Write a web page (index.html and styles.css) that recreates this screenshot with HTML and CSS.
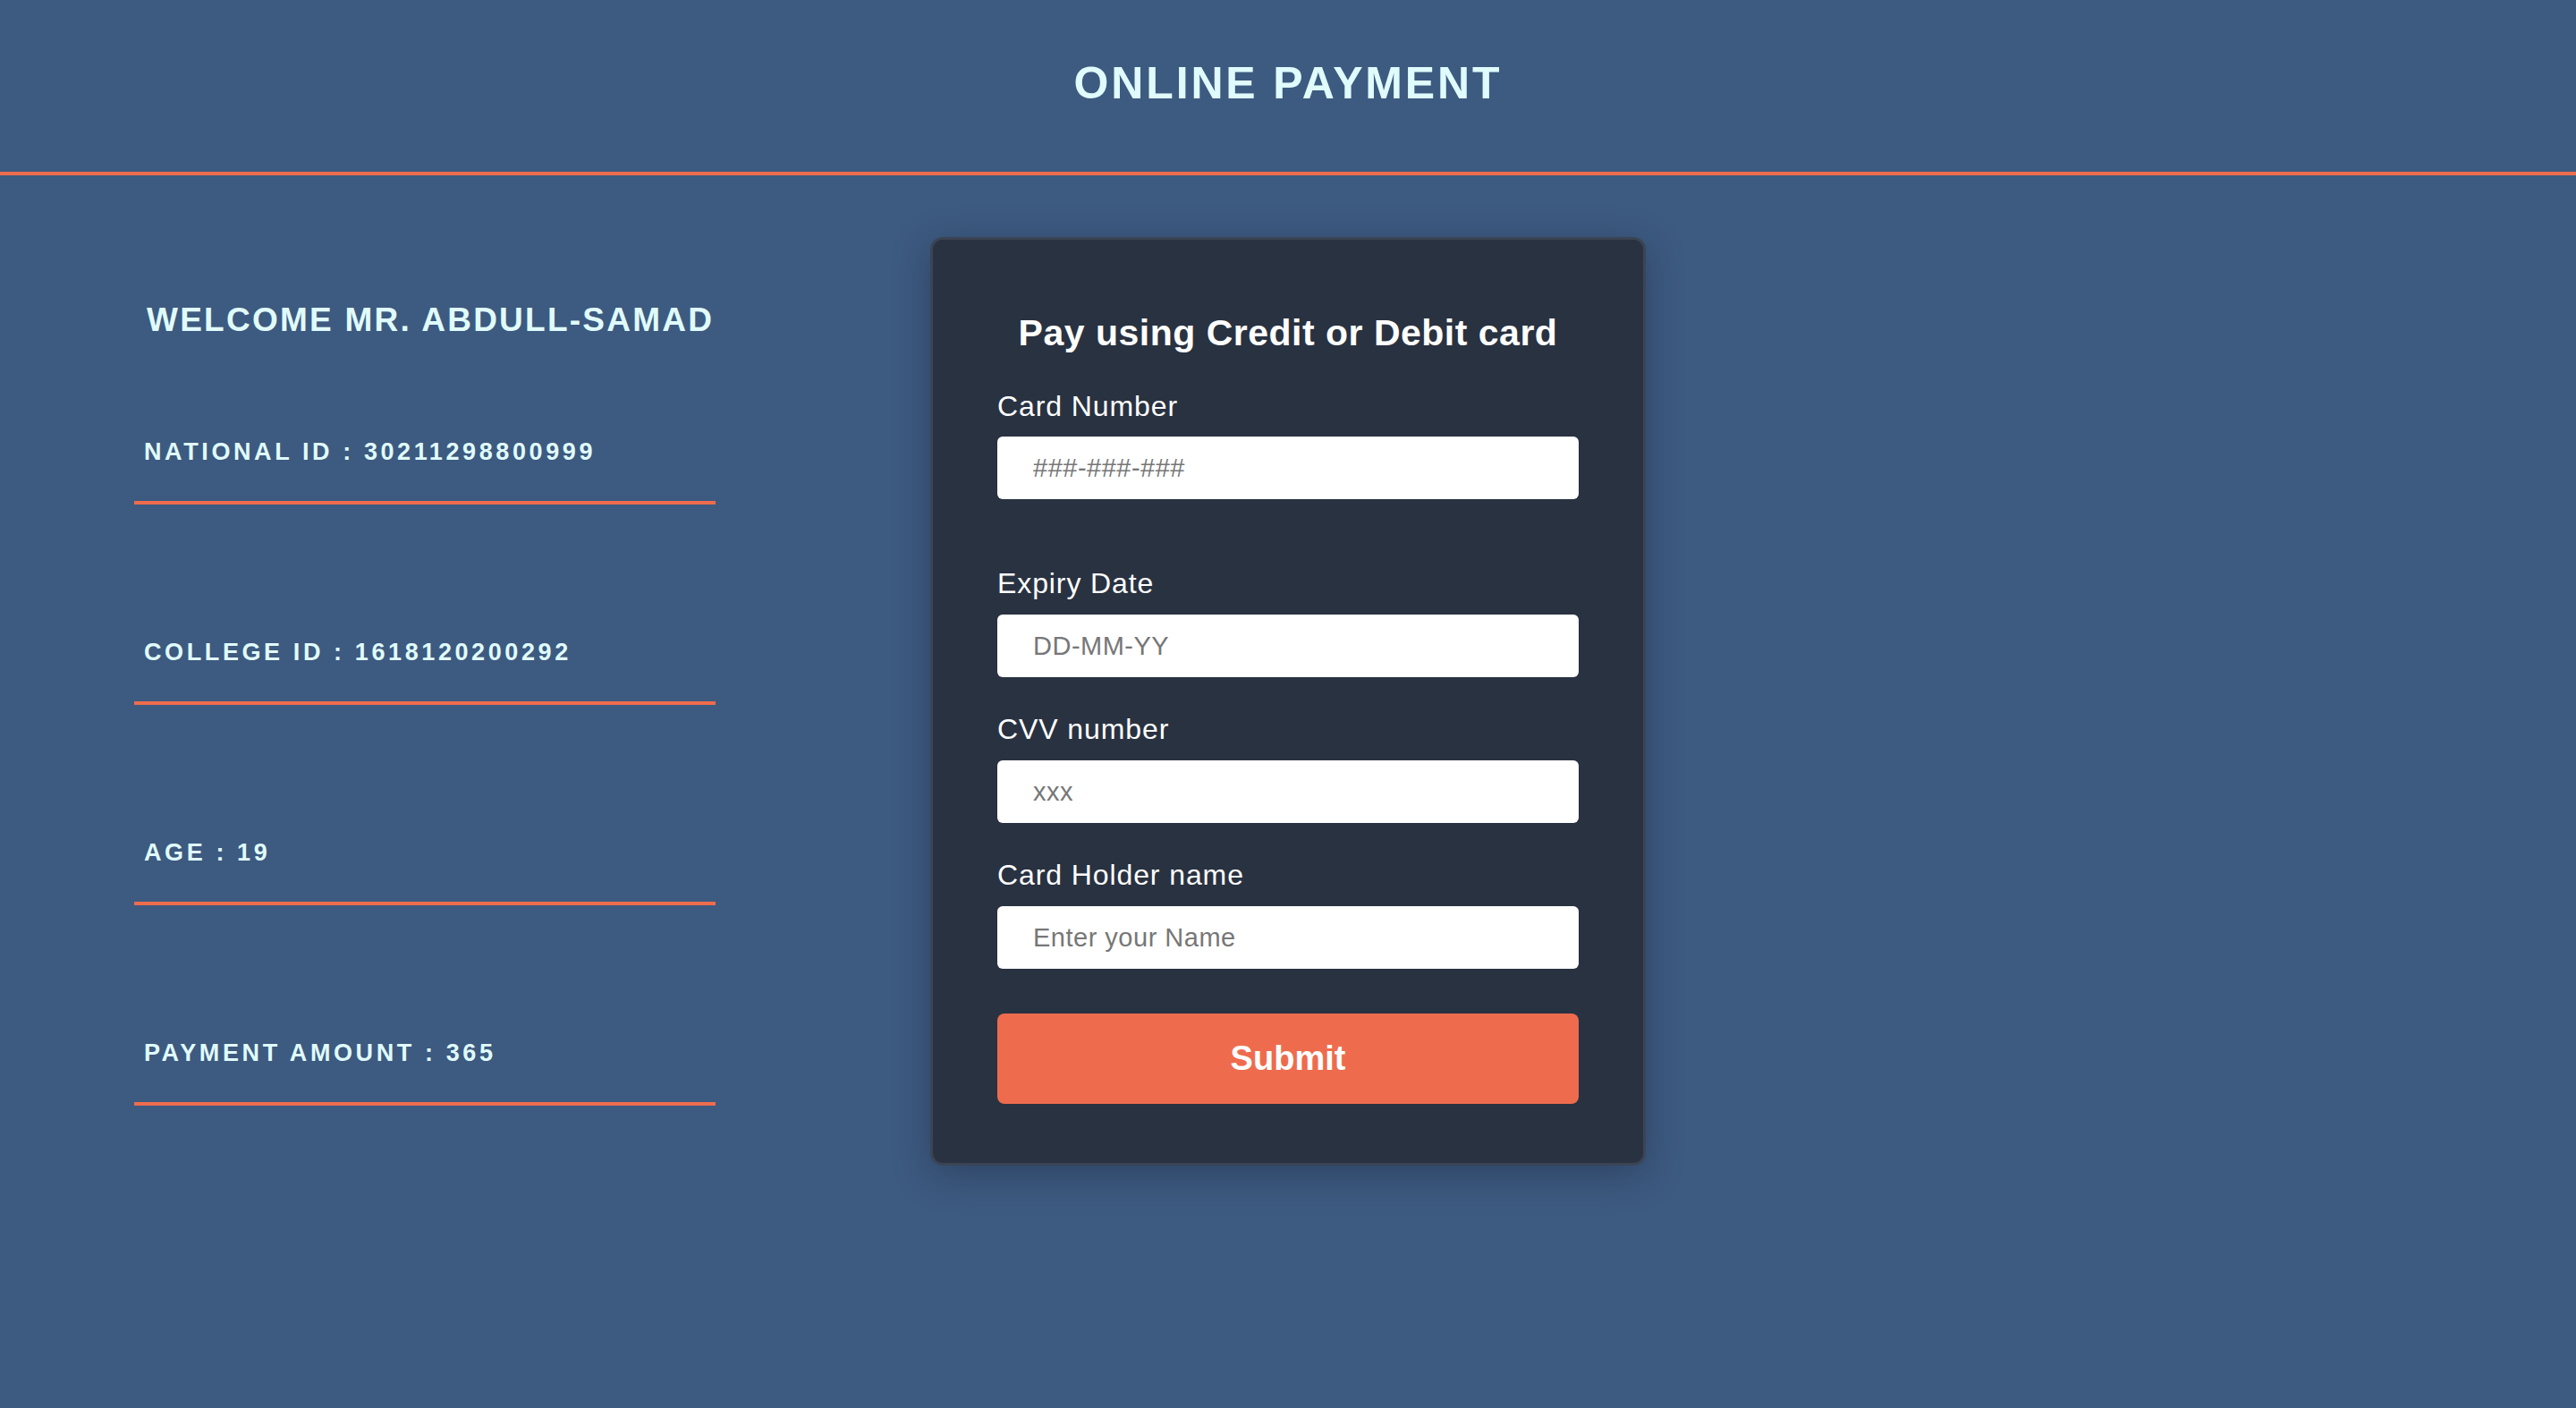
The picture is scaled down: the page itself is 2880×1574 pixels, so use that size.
FILE: index.html
```html
<!DOCTYPE html>
<html lang="en">
<head>
<meta charset="utf-8">
<title>Online Payment</title>
<link rel="stylesheet" href="styles.css">
</head>
<body>
<header class="topbar">
  <h1 class="topbar-title">ONLINE PAYMENT</h1>
</header>
<main class="layout">
  <section class="info">
    <h2 class="welcome">WELCOME MR. ABDULL-SAMAD</h2>
    <div class="info-row"><p class="info-text">NATIONAL ID : 30211298800999</p></div>
    <div class="info-row"><p class="info-text">COLLEGE ID : 1618120200292</p></div>
    <div class="info-row"><p class="info-text">AGE : 19</p></div>
    <div class="info-row"><p class="info-text">PAYMENT AMOUNT : 365</p></div>
  </section>
  <form class="card">
    <h3 class="card-title">Pay using Credit or Debit card</h3>
    <div class="field field-first">
      <label class="field-label">Card Number</label>
      <input class="field-input" type="text" placeholder="###-###-###">
    </div>
    <div class="field">
      <label class="field-label">Expiry Date</label>
      <input class="field-input" type="text" placeholder="DD-MM-YY">
    </div>
    <div class="field">
      <label class="field-label">CVV number</label>
      <input class="field-input" type="text" placeholder="xxx">
    </div>
    <div class="field field-last">
      <label class="field-label">Card Holder name</label>
      <input class="field-input" type="text" placeholder="Enter your Name">
    </div>
    <button class="submit" type="button">Submit</button>
  </form>
</main>
</body>
</html>
```
FILE: styles.css
```css
* { box-sizing: border-box; }
html, body {
  margin: 0;
  padding: 0;
}
body {
  background: #3d5a80;
  font-family: "Liberation Sans", Arial, Helvetica, sans-serif;
  color: #e0fbfc;
  min-height: 1574px;
}
.topbar {
  height: 196px;
  padding-top: 63px;
  border-bottom: 4px solid #ee6c4d;
}
.topbar-title {
  margin: 0;
  text-align: center;
  font-size: 50px;
  line-height: 60px;
  font-weight: 700;
  letter-spacing: 2.85px;
  color: #e0fbfc;
}
.layout {
  display: flex;
  align-items: flex-start;
  gap: 240px;
  padding-left: 150px;
}
.info {
  width: 650px;
  padding-top: 140px;
}
.welcome {
  margin: 0 0 107px 0;
  padding-left: 14px;
  font-size: 37px;
  line-height: 44px;
  font-weight: 700;
  letter-spacing: 2.25px;
  color: #e0fbfc;
}
.info-row {
  padding: 2px 0 39px 11px;
  border-bottom: 4px solid #ee6c4d;
  margin-bottom: 147px;
}
.info-text {
  margin: 0;
  font-size: 27px;
  line-height: 32px;
  font-weight: 700;
  letter-spacing: 3.6px;
  color: #e0fbfc;
}
.card {
  margin-top: 69px;
  width: 800px;
  background: #293241;
  border: 3px solid #3b4454;
  border-radius: 14px;
  padding: 80px 72px 66px 72px;
  box-shadow: 0 10px 40px rgba(20, 30, 50, 0.35);
  display: flex;
  flex-direction: column;
}
.card-title {
  margin: 0 0 40px 0;
  text-align: center;
  font-size: 41px;
  line-height: 48px;
  font-weight: 700;
  letter-spacing: 0.5px;
  color: #ffffff;
}
.field {
  display: flex;
  flex-direction: column;
  margin-bottom: 40px;
}
.field-first { margin-bottom: 76px; }
.field-last { margin-bottom: 50px; }
.field-first .field-label { margin-bottom: 15px; }
.field-label {
  font-size: 32px;
  line-height: 37px;
  letter-spacing: 0.9px;
  color: #ffffff;
  margin-bottom: 16px;
}
.field-input {
  height: 70px;
  width: 100%;
  border: none;
  border-radius: 6px;
  background: #ffffff;
  padding: 0 40px;
  font-family: "Liberation Sans", Arial, Helvetica, sans-serif;
  font-size: 29px;
  letter-spacing: 0.5px;
  color: #222;
  outline: none;
}
.field-input::placeholder {
  color: #777777;
}
.submit {
  height: 101px;
  width: 100%;
  border: none;
  border-radius: 8px;
  background: #ee6c4d;
  color: #ffffff;
  font-family: "Liberation Sans", Arial, Helvetica, sans-serif;
  font-size: 38px;
  font-weight: 700;
  cursor: pointer;
}
```
